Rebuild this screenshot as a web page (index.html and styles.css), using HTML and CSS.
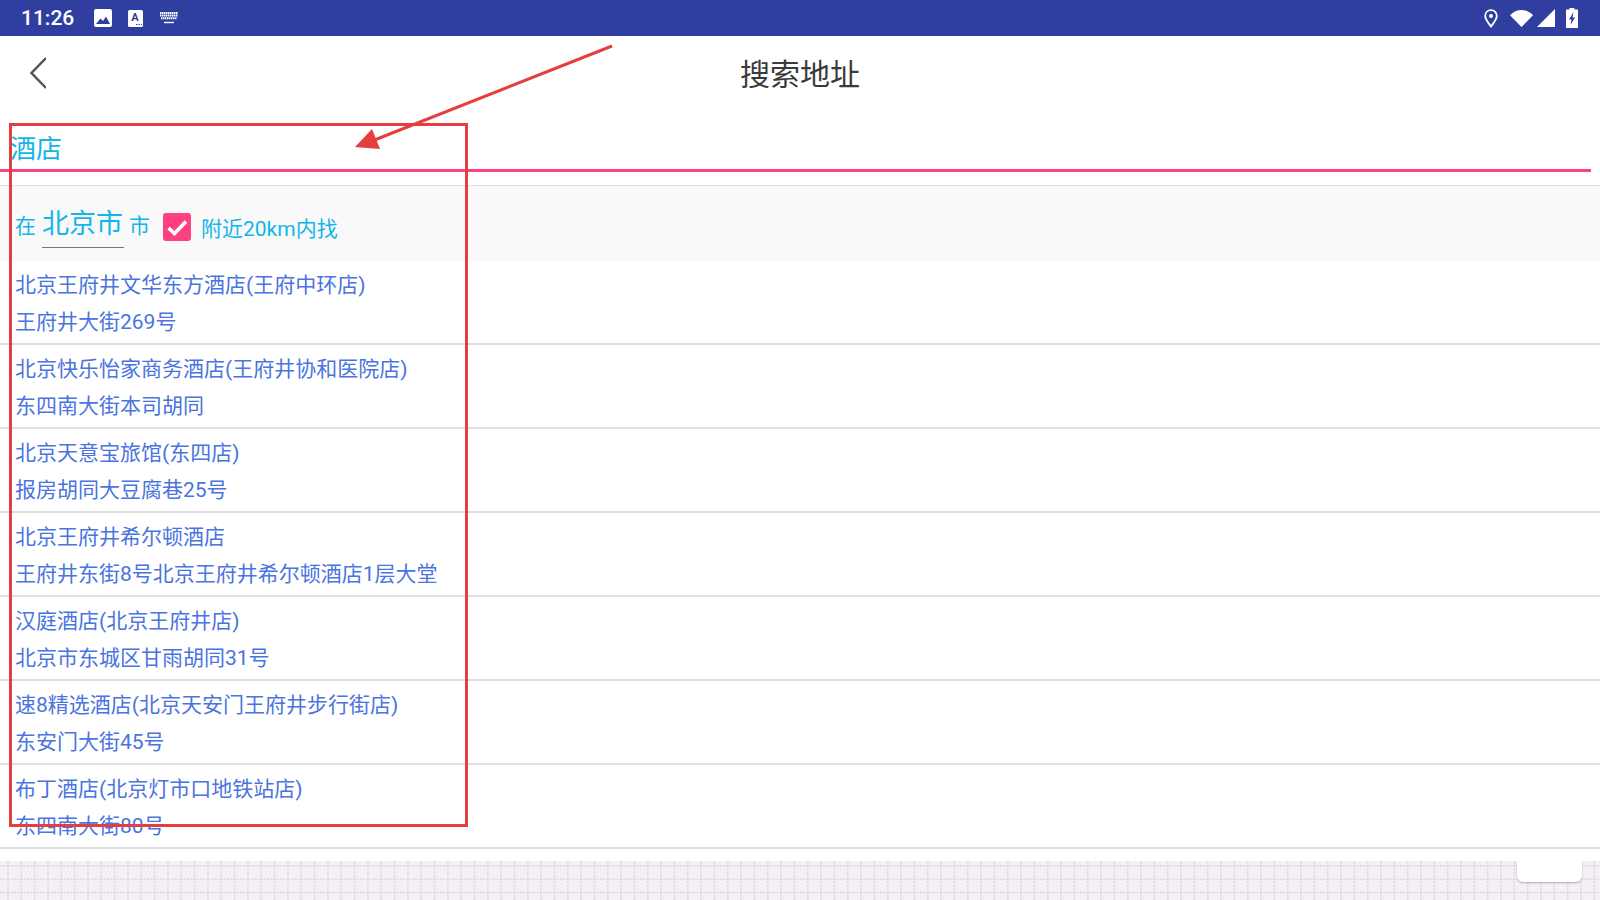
FILE: index.html
```html
<!DOCTYPE html>
<html lang="zh-CN">
<head>
    <meta charset="UTF-8">
    <meta name="viewport" content="width=device-width, initial-scale=1.0">
    <title>搜索地址</title>
    <link rel="stylesheet" href="styles.css">
</head>
<body>

    <div class="status-bar">
        <div class="status-left">
            <span class="clock">11:26</span>
            <svg class="icon-image" width="18" height="18" viewBox="0 0 18 18">
                <rect x="0" y="0" width="18" height="18" rx="2" fill="#fff"/>
                <path d="M2 15 L6.5 9.5 L9 12 L12 7.5 L16 15 Z" fill="#303f9f"/>
            </svg>
            <svg class="icon-font" width="15" height="17" viewBox="0 0 15 17">
                <rect width="15" height="17" rx="1.5" fill="#fff"/>
                <text x="7" y="11" class="icon-letter">A</text>
                <path d="M8 14.5h1.4M10.5 14.5h1.4M13 14.5h1" stroke="#303f9f" stroke-width="1.2"/>
            </svg>
            <svg class="icon-keys" width="20" height="12" viewBox="0 0 20 12">
                <path d="M1 1H19M1 3.600H19M2 6.300H18" stroke="#fff" stroke-width="2" stroke-dasharray="1.500 .5"/>
                <path d="M5 10.500H15" stroke="#fff" stroke-width="1.400"/>
            </svg>
        </div>
        <div class="status-right">
            <svg width="14" height="19" viewBox="0 0 14 19">
                <path d="M7 1.200C3.600 1.200 1.200 3.800 1.200 7C1.200 10.500 5 14.800 7 17.400C9 14.800 12.800 10.500 12.800 7C12.800 3.800 10.400 1.200 7 1.200Z" fill="none" stroke="#fff" stroke-width="1.800"/>
                <circle cx="7" cy="7" r="2" fill="#fff"/>
            </svg>
            <svg class="icon-wifi" width="23" height="17" viewBox="0 0 23 17">
                <path d="M0 5.200C6.500 -1.700 16.500 -1.700 23 5.200L11.500 17Z" fill="#fff"/>
            </svg>
            <svg class="icon-signal" width="18" height="18" viewBox="0 0 18 18">
                <path d="M18 0V18H0Z" fill="#fff"/>
            </svg>
            <svg class="icon-battery" width="12" height="20" viewBox="0 0 12 20">
                <path d="M3.500 0H8.500V1.500H12V20H0V1.500H3.500Z" fill="#fff"/>
                <path d="M7.500 4L3 11.500H5.500L4.500 17L9 9.500H6.500Z" fill="#303f9f"/>
            </svg>
        </div>
    </div>

    <div class="title-bar">
        <svg class="back" width="16" height="32" viewBox="0 0 16 32">
            <path d="M16 1L1.500 16L16 31" fill="none" stroke="#555" stroke-width="2.500"/>
        </svg>
        <div class="title">搜索地址</div>
    </div>

    <div class="search-input">酒店</div>

    <div class="filter">
        <span>在</span>
        <span class="city">北京市</span>
        <span>市</span>
        <span class="check">
            <svg width="28" height="28" viewBox="0 0 28 28">
                <path d="M5.500 15L11.500 20.500L23 8.500" fill="none" stroke="#fff" stroke-width="3.500"/>
            </svg>
        </span>
        <span class="near">附近20km内找</span>
    </div>

    <div class="list">
        <div class="row">
            <div>北京王府井文华东方酒店(王府中环店)</div>
            <div>王府井大街269号</div>
        </div>
        <div class="row">
            <div>北京快乐怡家商务酒店(王府井协和医院店)</div>
            <div>东四南大街本司胡同</div>
        </div>
        <div class="row">
            <div>北京天意宝旅馆(东四店)</div>
            <div>报房胡同大豆腐巷25号</div>
        </div>
        <div class="row">
            <div>北京王府井希尔顿酒店</div>
            <div>王府井东街8号北京王府井希尔顿酒店1层大堂</div>
        </div>
        <div class="row">
            <div>汉庭酒店(北京王府井店)</div>
            <div>北京市东城区甘雨胡同31号</div>
        </div>
        <div class="row">
            <div>速8精选酒店(北京天安门王府井步行街店)</div>
            <div>东安门大街45号</div>
        </div>
        <div class="row">
            <div>布丁酒店(北京灯市口地铁站店)</div>
            <div>东四南大街80号</div>
        </div>
    </div>

    <div class="keyboard">
        <svg class="key-grid" width="100%" height="100%">
            <defs>
                <pattern id="grid" x="7" y="4" width="13.33" height="13.33" patternUnits="userSpaceOnUse">
                    <path d="M1 0V13.330M0 1H13.330" stroke="#d8d2d8" stroke-width="1.500" stroke-dasharray="2 1.300" fill="none"/>
                </pattern>
            </defs>
            <rect width="100%" height="100%" fill="url(#grid)"/>
        </svg>
        <div class="key"></div>
    </div>

    <!-- red marks drawn on top of the screenshot -->
    <svg class="marks" width="1600" height="900" viewBox="0 0 1600 900">
        <rect x="10.500" y="124.500" width="456" height="701" fill="none" stroke="#e53e3e" stroke-width="3"/>
        <path d="M612 46L372 141" fill="none" stroke="#e53e3e" stroke-width="3"/>
        <path d="M355 147L372 129L380 149Z" fill="#e53e3e"/>
    </svg>

</body>
</html>
```

FILE: styles.css
```css
html, body {
    height: 900px;
}

body {
    margin: 0;
    padding: 0;
    background-color: #fff;
    font-family: Roboto, "Noto Sans CJK SC", sans-serif;
    overflow: hidden;
}

.status-bar {
    height: 36px;
    background-color: #303f9f;
    color: #fff;
    display: flex;
    align-items: center;
    justify-content: space-between;
    padding: 0 22px 0 21px;
}

.status-left {
    display: flex;
    align-items: center;
}

.clock {
    font-size: 21px;
    font-weight: 500;
    width: 73px;
}

.icon-font {
    margin-left: 16px;
}

.icon-keys {
    margin-left: 16px;
}

.icon-letter {
    font-size: 11px;
    font-weight: 700;
    fill: #303f9f;
    text-anchor: middle;
}

.status-right {
    display: flex;
    align-items: center;
}

.icon-wifi {
    margin-left: 12px;
}

.icon-signal {
    margin-left: 4px;
}

.icon-battery {
    margin-left: 11px;
}

.title-bar {
    height: 72px;
    padding-bottom: 4px;
    display: flex;
    align-items: center;
    justify-content: center;
    position: relative;
}

.back {
    position: absolute;
    left: 30px;
    top: 21px;
}

.title {
    font-size: 30px;
    color: #3a3a3a;
}

.search-input {
    height: 50px;
    padding-top: 7px;
    border-bottom: 3px solid #ff4081;
    margin-right: 9px;
    padding-left: 10px;
    font-size: 26px;
    line-height: 60px;
    color: #13b5ea;
}

.filter {
    margin-top: 13px;
    height: 76px;
    box-sizing: border-box;
    border-top: 1px solid #e0e0e0;
    background-color: #f9f9f9;
    display: flex;
    align-items: center;
    padding: 0 0 0 15px;
    font-size: 21px;
    color: #13b5ea;
}

.city {
    font-size: 27px;
    width: 82px;
    height: 48px;
    margin: 0 5px 0 6px;
    padding-top: 2px;
    box-sizing: border-box;
    border-bottom: 1px solid #777;
}

.check {
    width: 28px;
    height: 28px;
    margin: 7px 10px 0 13px;
    background-color: #ff4081;
    border-radius: 3px;
}

.check svg {
    display: block;
}

.near {
    margin-top: 6px;
}

.row {
    height: 84px;
    box-sizing: border-box;
    border-bottom: 2px solid #e0e0e0;
    padding: 6px 0 0 15px;
    font-size: 21px;
    line-height: 37px;
    color: #4a74e0;
}

.keyboard {
    height: 39px;
    margin-top: 12px;
    background-color: #f5f0f5;
    position: relative;
}

.key-grid {
    display: block;
}

.key {
    position: absolute;
    left: 1517px;
    top: 0;
    width: 65px;
    height: 21px;
    background-color: #fff;
    border-radius: 0 0 6px 6px;
    box-shadow: 0 1px 2px rgba(0, 0, 0, 0.3);
}

.marks {
    position: absolute;
    left: 0;
    top: 0;
}
```
